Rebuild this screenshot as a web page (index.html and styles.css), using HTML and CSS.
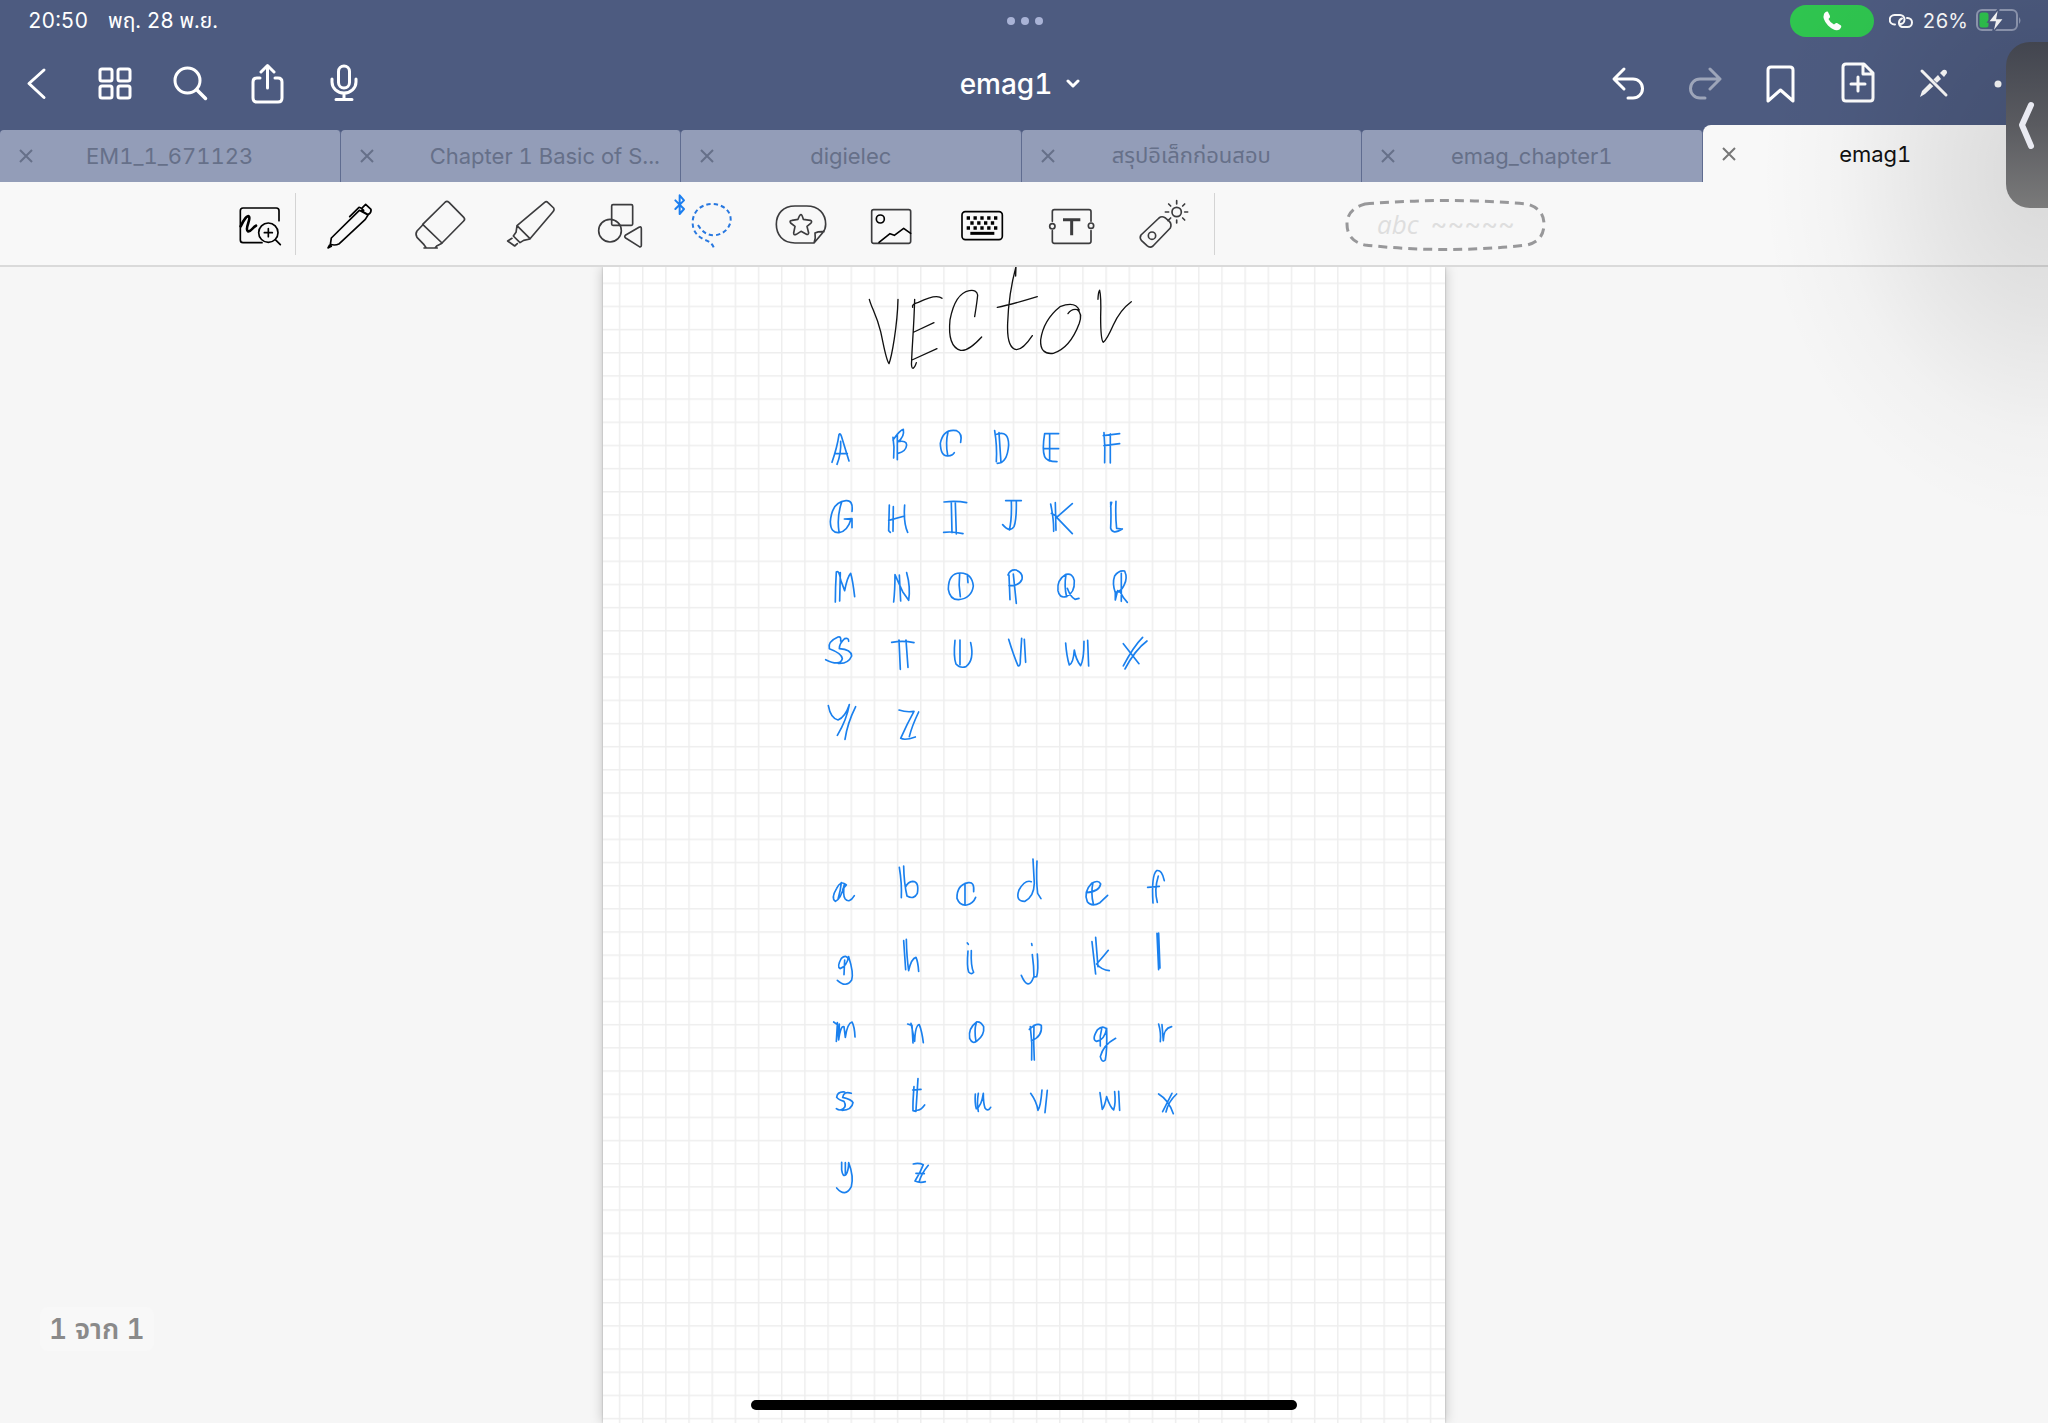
FILE: index.html
```html
<!DOCTYPE html>
<html lang="th">
<head>
<meta charset="utf-8">
<meta name="viewport" content="width=device-width, initial-scale=1">
<title>emag1</title>
<link rel="stylesheet" href="styles.css">
</head>
<body>
<div class="app">
  <header class="header">
    <div class="status">
      <div class="status-left"><span>20:50</span><span>พฤ. 28 พ.ย.</span></div>
      <div class="dots"><i></i><i></i><i></i></div>
      <div class="status-right">
        <span class="call">
          <svg width="22" height="22" viewBox="0 0 22 22"><path fill="#fff" d="M3 4C4 2 6 1 7 2L9 6Q9.500 7.500 7.500 9Q9 12.500 13 14.500Q14.500 12.500 16 13L20 15.500Q21 17 18.500 19.500Q14 22 7 15.500Q1 9 3 4Z"/></svg>
        </span>
        <svg class="link" width="24" height="16" viewBox="0 0 24 16"><path class="line" d="M6 11.500H5.500A4.500 4.500 0 0 1 5.500 2H11A4.500 4.500 0 0 1 11 11H10M18 5H18.500A4.500 4.500 0 0 1 18.500 14H13A4.500 4.500 0 0 1 13 5.500"/></svg>
        <span>26%</span>
        <svg class="battery" width="46" height="28" viewBox="0 -2 46 28"><rect x="1" y="1" width="40" height="20" rx="5" fill="none" stroke="#929bb5" stroke-width="2"/><path d="M43 8Q46 11.500 43 15Z" fill="#929bb5"/><rect x="3.500" y="3.500" width="9" height="15" rx="2.500" fill="#2fc54f"/><path d="M23 -1L12 13H19L16.500 24L28 9.500H21Z" fill="#fff" stroke="#4d5b80" stroke-width="1.500"/></svg>
      </div>
    </div>

    <nav class="nav">
      <div class="nav-group">
        <button class="nav-btn" aria-label="Back"><svg width="75" height="58" viewBox="0 55 75 58"><path class="line" d="M44 70L29 83.500L44 97.500"/></svg></button>
        <button class="nav-btn" aria-label="Pages"><svg width="77" height="58" viewBox="75 55 77 58"><g class="line"><rect x="100" y="69" width="12" height="12" rx="2"/><rect x="118" y="69" width="12" height="12" rx="2"/><rect x="100" y="86" width="12" height="12" rx="2"/><rect x="118" y="86" width="12" height="12" rx="2"/></g></svg></button>
        <button class="nav-btn" aria-label="Search"><svg width="77" height="58" viewBox="152 55 77 58"><g class="line"><circle cx="187.500" cy="80.500" r="12.500"/><path stroke-width="3.500" d="M197 90L205.500 98.500"/></g></svg></button>
        <button class="nav-btn" aria-label="Share"><svg width="77" height="58" viewBox="229 55 77 58"><path class="line" d="M260 78H257Q253 78 253 82V98Q253 102 257 102H278Q282 102 282 98V82Q282 78 278 78H275M267.500 88V66M261 72L267.500 65.500L274 72"/></svg></button>
        <button class="nav-btn" aria-label="Record"><svg width="77" height="58" viewBox="306 55 77 58"><g class="line"><rect x="338.500" y="66" width="11" height="22" rx="5.500"/><path d="M332 79V82A12 11 0 0 0 356 82V79M344 93V99M336 99.500H352"/></g></svg></button>
      </div>
      <button class="title">emag1 <svg width="14" height="10" viewBox="0 0 14 10"><path class="line" d="M2 2L7 7L12 2"/></svg></button>
      <div class="nav-group nav-end">
        <button class="nav-btn" aria-label="Undo"><svg width="76" height="58" viewBox="1591 55 76 58"><path class="line" d="M1624 69L1614 79L1624 89M1615 79H1633A9.500 9.500 0 0 1 1633 98H1628"/></svg></button>
        <button class="nav-btn" aria-label="Redo" disabled><svg width="76" height="58" viewBox="1667 55 76 58"><path class="line" d="M1710 69L1720 79L1710 89M1719 79H1700A9.500 9.500 0 0 0 1700 98H1705"/></svg></button>
        <button class="nav-btn" aria-label="Bookmark"><svg width="76" height="58" viewBox="1743 55 76 58"><path class="line" d="M1768 70Q1768 67 1771 67H1790Q1793 67 1793 70V101L1780.500 90L1768 101Z"/></svg></button>
        <button class="nav-btn" aria-label="Add page"><svg width="76" height="58" viewBox="1819 55 76 58"><path class="line" d="M1864 64H1846Q1843 64 1843 67V98Q1843 101 1846 101H1870Q1873 101 1873 98V73ZM1863 65V74H1872M1858 77V91M1851 84H1865"/></svg></button>
        <button class="nav-btn" aria-label="Read only"><svg width="76" height="58" viewBox="1895 55 76 58"><path fill="#fff" d="M1920 97L1922 91L1938 75L1941 79L1925 94ZM1940 73L1943 70Q1947 69 1947 73L1944 77Z"/><path d="M1922 72L1947 96" stroke="#4b587b" stroke-width="5"/><path class="line" d="M1922 71L1946 95"/></svg></button>
        <button class="nav-btn" aria-label="More"><svg width="76" height="58" viewBox="1971 55 76 58"><g fill="#fff"><circle cx="1998" cy="84" r="3.500"/><circle cx="2010" cy="84" r="3.500"/><circle cx="2022" cy="84" r="3.500"/></g></svg></button>
      </div>
    </nav>

    <div class="tabs">
      <div class="tab"><button class="close" aria-label="Close tab"><svg width="14" height="14" viewBox="0 0 14 14"><path d="M1 1L13 13M13 1L1 13"/></svg></button><a href="#">EM1_1_671123</a></div>
      <div class="tab tab-long"><button class="close" aria-label="Close tab"><svg width="14" height="14" viewBox="0 0 14 14"><path d="M1 1L13 13M13 1L1 13"/></svg></button><a href="#">Chapter 1 Basic of S...</a></div>
      <div class="tab"><button class="close" aria-label="Close tab"><svg width="14" height="14" viewBox="0 0 14 14"><path d="M1 1L13 13M13 1L1 13"/></svg></button><a href="#">digielec</a></div>
      <div class="tab"><button class="close" aria-label="Close tab"><svg width="14" height="14" viewBox="0 0 14 14"><path d="M1 1L13 13M13 1L1 13"/></svg></button><a href="#">สรุปอิเล็กก่อนสอบ</a></div>
      <div class="tab"><button class="close" aria-label="Close tab"><svg width="14" height="14" viewBox="0 0 14 14"><path d="M1 1L13 13M13 1L1 13"/></svg></button><a href="#">emag_chapter1</a></div>
      <div class="tab tab-active"><button class="close" aria-label="Close tab"><svg width="14" height="14" viewBox="0 0 14 14"><path d="M1 1L13 13M13 1L1 13"/></svg></button><a href="#">emag1</a></div>
    </div>
  </header>

  <div class="tools">
    <button class="tool tool-zoom" aria-label="Zoom window"><svg viewBox="0 12 225 180"><g class="ink bold"><path d="M177 92V62Q177 54 169 54H69Q61 54 61 62V150Q61 158 69 158H126"/><path stroke-width="8" d="M62 109C72 88 82 74 87 80C94 88 72 118 84 124C94 126 99 110 108 107"/><circle cx="145" cy="128" r="29"/><path d="M133 128H157M145 116V140M166 149L181 164"/></g></svg></button>
    <span class="rule"></span>
    <button class="tool" aria-label="Pen"><svg viewBox="255 12 270 180"><path class="ink bold" d="M324 174L329 165L334 169ZM331 163L334 144L418 61L444 75L436 88L358 161Q345 168 331 163M428 52L437 43L453 58Q455 66 445 74L424 62M389 80L417 52L423 54L431 61"/></svg></button>
    <button class="tool" aria-label="Eraser"><svg viewBox="525 12 270 180"><path class="ink" d="M608 103L676 36Q681 32 687 37L732 83Q736 88 731 93L666 159ZM608 105L591 123Q585 132 591 142L612 164L619 174H645L650 168L666 160M612 174H652"/></svg></button>
    <button class="tool" aria-label="Highlighter"><svg viewBox="795 12 270 180"><path class="ink" d="M891 107L974 37Q979 33 984 38L1001 54Q1004 60 999 65L930 146ZM891 108L888 127L880 138L900 158L911 151L930 147M876 145L863 153L884 168L892 161"/></svg></button>
    <button class="tool" aria-label="Shapes"><svg viewBox="1065 12 270 180"><g class="ink"><rect x="1175" y="44" width="63" height="62" rx="4"/><circle cx="1170" cy="122" r="34"/><path d="M1257 112L1216 136Q1212 140 1217 144L1258 170Q1264 172 1264 166V116Q1264 108 1257 112Z"/></g></svg></button>
    <button class="tool" aria-label="Lasso"><svg viewBox="1335 12 270 180"><path class="ink blue radio" d="M1366 31L1392 57L1379 72V16L1392 31L1366 57"/><g class="ink blue dashed"><path d="M1434 105C1445 123 1460 137 1484 136C1512 133 1532 112 1532 88C1532 62 1508 42 1476 42C1444 42 1419 64 1418 95C1417 125 1434 140 1453 149Q1474 155 1481 172"/></g></svg></button>
    <button class="tool" aria-label="Stickers"><svg viewBox="165 12 270 180"><g class="ink"><path d="M342 159H285C248 159 229 134 229 103C229 70 250 48 285 48H320C356 48 377 70 377 103Q377 118 368 128ZM342 159Q348 145 345 129Q355 124 372 125"/><path d="M303 74Q306 74 310 88L331 91Q338 94 332 100L321 109L326 129Q325 136 318 132L303 124L289 133Q281 137 281 129L285 109L272 99Q267 92 276 91L294 88Q299 74 303 74Z"/></g></svg></button>
    <button class="tool" aria-label="Image"><svg viewBox="435 12 270 180"><g class="ink"><rect x="515" y="59" width="117" height="101" rx="6"/><g class="bold"><circle cx="541" cy="87" r="12"/><path d="M537 157L570 131L583 136L611 115L632 130"/></g></g></svg></button>
    <button class="tool" aria-label="Keyboard"><svg viewBox="705 12 270 180"><rect class="ink bold" x="786" y="65" width="121" height="84" rx="10"/><path stroke="#000" stroke-width="10" stroke-dasharray="10 10.500" d="M800 84H894M811 99H885M800 114H894"/><path stroke="#000" stroke-width="9" d="M811 130H883"/></svg></button>
    <button class="tool" aria-label="Text box"><svg viewBox="975 12 270 180"><g class="ink"><path d="M1057 94V65Q1057 59 1063 59H1167Q1173 59 1173 65V94M1057 122V154Q1057 160 1063 160H1167Q1173 160 1173 154V122"/><circle cx="1057" cy="109" r="8"/><circle cx="1173" cy="107" r="8"/><path class="heavy" d="M1089 89H1141M1115 89V136"/></g></svg></button>
    <button class="tool" aria-label="Laser pointer"><svg viewBox="1245 12 270 180"><g class="ink"><path d="M1323 135L1377 84Q1385 77 1395 83L1408 94Q1416 102 1411 114L1359 168Q1350 175 1341 167L1324 151Q1318 143 1323 135Z"/><circle cx="1356" cy="137" r="11"/><circle cx="1430" cy="66" r="14"/><path d="M1430 32V42M1430 90V99M1396 66H1406M1454 66H1463M1406 42L1412 48M1448 84L1454 90M1454 42L1448 48M1412 84L1404 92"/></g></svg></button>
    <span class="rule rule-end"></span>
    <button class="style"><svg width="202" height="62" viewBox="1344 192 202 62"><path d="M1364 203Q1445 196 1526 203Q1543 208 1543 223Q1543 240 1526 244Q1445 253 1364 244Q1346 240 1346 223Q1346 208 1364 203Z"/></svg><span class="sample"><i>abc</i><span>~~~~~</span></span></button>
  </div>

  <main class="desk">
    <div class="sheet">
      <svg class="paper" viewBox="603 267 842 1156" preserveAspectRatio="xMidYMin slice" role="img" aria-label="Vector, A to Z, a to z">
        <defs><pattern id="grid" x="618.800" y="282.500" width="23.170" height="23.170" patternUnits="userSpaceOnUse"><path d="M0 .75H23.170M.75 0V23.170" stroke="#eeeeee" stroke-width="1.500"/></pattern></defs>
        <rect x="603" y="267" width="842" height="3000" fill="url(#grid)"/>
        <g class="hand black" transform="translate(840 260) scale(.3333)">
          <path d="M88 118C95 145 110 165 122 215C132 260 138 300 147 311C155 290 172 200 174 118"/>
          <path d="M224 118C222 200 216 260 215 300Q213 325 219 325Q225 322 229 308M218 142Q214 132 235 127Q290 100 306 115M222 216L282 188M216 300L291 266"/>
          <path d="M404 170Q412 120 413 105Q410 88 388 92Q345 100 330 180Q322 260 362 271Q385 275 425 231"/>
          <path d="M527 48L528 20Q506 100 503 190Q500 265 530 269Q550 268 577 227M472 142Q510 135 592 110"/>
          <path d="M684 161Q695 145 712 149Q728 160 718 190Q690 265 640 280Q600 285 602 240Q610 180 660 140Q705 122 718 150"/>
          <path d="M774 118Q775 95 779 91Q784 110 782 170Q782 240 790 247Q800 240 820 195Q840 150 874 125"/>
        </g>
        <g class="hand" transform="translate(810 410) scale(.3333)">
          <path d="M66 157Q82 110 87 74Q90 68 94 78L117 153M92 94Q94 130 81 163M74 130L112 131"/>
          <path d="M249 82Q254 110 251 144M262 72L262 149M249 90Q270 60 280 58Q284 80 264 95Q290 90 290 105Q288 125 264 130"/>
          <path d="M452 97Q458 70 440 62Q400 55 391 100Q392 140 414 138Q428 137 433 128M414 66Q406 100 413 135"/>
          <path d="M554 62Q562 110 559 155M567 68L573 158M560 73Q596 60 596 105Q592 160 562 160"/>
          <path d="M746 71H704Q696 120 704 140Q710 155 741 155M719 72V153M702 116H746"/>
          <path d="M882 68Q886 110 884 158M901 72V159M880 77L929 71M882 107L929 101"/>
          <path d="M126 304Q130 270 108 272Q66 275 61 335Q62 370 87 368Q112 365 123 328L103 327L126 326V353M95 277Q80 320 87 366"/>
          <path d="M238 285L236 362L241 367M250 290L249 364M236 331L284 318M284 285Q280 340 293 367"/>
          <path d="M402 276Q440 272 470 278M424 278L426 368M436 278L439 372M401 367Q430 364 459 371"/>
          <path d="M587 272H634M604 273Q606 330 598 360M619 273Q620 330 612 350Q600 370 578 344"/>
          <path d="M722 282Q732 330 731 364M736 278L738 361M787 281L740 322L787 371M724 310L742 320"/>
          <path d="M902 277Q904 320 902 355Q908 375 937 357M918 274Q916 320 920 355L936 357M902 290L905 277"/>
        </g>
        <g class="hand" transform="translate(810 560) scale(.3333)">
          <path d="M76 126Q76 80 79 36Q88 30 92 60L104 92Q112 50 122 40Q128 60 134 110M91 38L89 123"/>
          <path d="M251 126Q255 90 255 44Q262 60 278 95L296 121Q302 80 290 38M268 45L272 123"/>
          <path d="M452 39Q415 38 415 88Q420 120 446 119Q485 115 490 78Q486 40 452 39M449 40Q445 75 451 110M472 44L474 68"/>
          <path d="M597 45L600 119M610 42L619 130M594 45Q600 28 618 30Q640 38 636 58Q628 78 597 77"/>
          <path d="M768 43Q740 60 744 92Q748 115 768 110Q795 100 793 62Q788 38 768 43M768 44Q762 80 770 110M772 85Q782 112 795 118L807 115"/>
          <path d="M923 92L916 120V98Q906 70 914 48Q926 30 944 33Q954 55 942 76Q934 94 916 97L930 95Q940 115 952 127M934 40V124"/>
          <path d="M92 243Q94 228 84 231Q52 245 58 266Q96 280 97 296Q90 320 47 299M116 244Q116 232 104 236Q88 250 88 266Q124 268 125 288Q115 312 85 310"/>
          <path d="M245 247Q280 241 312 248M267 240L271 328M288 240L294 322"/>
          <path d="M435 241Q430 290 438 312Q450 326 468 320Q494 300 482 248M450 240V314"/>
          <path d="M596 238Q612 290 624 317Q632 320 631 300L635 235M643 238L647 307"/>
          <path d="M767 249Q770 290 778 315Q790 310 793 270Q798 300 812 317Q822 300 822 244M833 241L836 318"/>
          <path d="M940 251L987 311M998 232Q970 260 940 318M1011 243Q975 270 945 327"/>
          <path d="M55 437Q62 475 84 480Q106 470 118 434Q110 480 82 526M137 440Q112 490 105 538"/>
          <path d="M267 450Q290 458 312 454Q292 490 272 535Q285 542 316 531M326 456Q305 500 298 530"/>
        </g>
        <g class="hand" transform="translate(810 850) scale(.3333)">
          <path d="M108 104Q92 90 80 115Q62 145 76 154Q92 150 103 104Q98 135 105 146Q118 162 133 137M94 98Q92 120 84 148M98 118L109 105"/>
          <path d="M268 52Q276 100 274 143M281 48Q282 100 291 138Q312 150 322 130Q328 94 308 94Q294 95 286 112"/>
          <path d="M491 125Q494 95 475 98Q440 105 441 145Q450 168 470 165Q490 160 497 142M465 100V162"/>
          <path d="M664 95Q645 88 627 120Q615 155 645 154Q672 140 673 100L669 27M681 33Q678 90 683 130L693 146"/>
          <path d="M829 128Q868 125 872 102Q865 88 845 100Q820 125 832 155Q845 172 870 158L893 136M849 98Q842 130 850 161"/>
          <path d="M1063 92Q1056 58 1040 62Q1024 75 1029 159M1045 78Q1032 120 1042 157M1013 112L1048 109"/>
          <path d="M116 328Q108 312 94 325Q80 350 90 356Q110 350 116 320Q132 370 125 390Q108 415 82 391M104 330L102 374"/>
          <path d="M281 272L287 359M289 268Q290 320 296 362Q304 325 318 322Q324 335 326 364"/>
          <path d="M474 303Q470 350 476 366Q484 375 491 367Q482 350 484 302M472 279L475 283"/>
          <path d="M667 314Q672 350 672 382M682 312Q686 360 680 380L671 381Q655 425 634 376M665 281L666 286"/>
          <path d="M846 275L857 372M857 262L864 350M895 301Q880 320 860 342Q875 360 898 362"/>
          <path d="M1041 250L1046 359M1046 249L1050 354M1043 252L1046 320"/>
        </g>
        <g class="hand" transform="translate(810 1000) scale(.3333)">
          <path d="M71 66L82 74L79 124M82 68L86 120Q92 75 102 80L106 112Q112 70 126 66Q134 80 135 111M88 72L87 110"/>
          <path d="M293 72L306 76L309 129M303 70L314 124Q316 75 328 74Q336 95 340 128"/>
          <path d="M500 66Q474 85 479 115Q488 135 502 122Q524 105 521 80Q512 64 500 66M499 68Q492 90 498 124"/>
          <path d="M661 80Q668 130 665 180M672 76Q670 130 673 180M658 88Q680 66 694 76Q698 110 664 122"/>
          <path d="M890 88Q880 74 862 90Q844 120 860 124Q884 120 890 85Q892 150 886 180Q876 190 871 170Q880 135 917 115M876 82Q868 110 871 138"/>
          <path d="M1046 72Q1054 100 1051 125M1056 74L1060 122Q1060 85 1085 80"/>
          <path d="M104 276Q82 274 80 292Q86 300 102 304Q110 318 100 326Q90 334 79 326M124 280Q102 272 98 292Q125 298 129 308Q126 330 96 331"/>
          <path d="M324 236L318 330Q330 334 344 315M312 260Q308 310 309 332L318 334M308 270L333 268"/>
          <path d="M496 282Q494 310 499 326Q514 320 520 280Q520 310 525 324Q534 336 542 322M505 280Q500 310 505 334"/>
          <path d="M662 280Q680 305 684 331Q692 320 696 270M712 271L705 338"/>
          <path d="M870 278L877 328Q884 320 890 290Q900 320 911 330Q918 310 914 275M926 274L929 331"/>
          <path d="M1046 282Q1076 300 1090 341M1086 280L1058 335M1100 282Q1075 305 1068 336"/>
          <path d="M95 487V510Q98 532 108 524Q116 510 116 488Q132 530 124 560Q106 594 80 564M106 488V522"/>
          <path d="M310 492Q326 488 340 494Q330 520 315 543Q330 550 346 545M355 496Q335 520 328 544M318 520L343 521"/>
        </g>
      </svg>
    </div>
    <p class="counter">1 จาก 1</p>
    <div class="home-bar"></div>
  </main>
</div>
<div class="drawer-shade"></div>
<button class="drawer" aria-label="Show call"><svg width="42" height="60" viewBox="0 0 42 60"><path d="M25 10L16 30L25 51"/></svg></button>
</body>
</html>
```
FILE: styles.css
```css
* { box-sizing: border-box; }

body {
  position: relative;
  margin: 0;
  min-height: 100vh;
  overflow: hidden;
  font-family: Inter, "Noto Sans", "Noto Sans Thai", sans-serif;
  font-variant-numeric: tabular-nums;
  background: #f6f6f6;
}

button {
  padding: 0;
  border: 0;
  background: none;
  color: inherit;
  font: inherit;
}

svg { display: block; flex: none; }

.app {
  display: flex;
  flex-direction: column;
  min-height: 100vh;
}

.header {
  background: #4d5b80;
  color: #fff;
}

.line {
  fill: none;
  stroke: #fff;
  stroke-width: 3;
  stroke-linecap: round;
  stroke-linejoin: round;
}

/* Status bar */
.status {
  display: grid;
  grid-template-columns: 1fr auto 1fr;
  align-items: center;
  height: 42px;
  padding: 0 26px 0 28px;
  font-size: 20px;
}

.status-left {
  display: flex;
  gap: 20px;
  font-size: 21px;
  line-height: 30px;
}

.dots { display: flex; gap: 6px; }

.dots i {
  width: 8px;
  height: 8px;
  border-radius: 50%;
  background: #a9b3d6;
}

.status-right {
  display: flex;
  align-items: center;
  justify-content: flex-end;
}

.call {
  display: grid;
  place-items: center;
  width: 84px;
  height: 32px;
  border-radius: 16px;
  background: #2fc54f;
}

.link { margin: 0 9px 0 15px; }
.link .line { stroke-width: 2; }
.battery { margin-left: 8px; }

/* Document bar */
.nav {
  display: grid;
  grid-template-columns: 1fr auto 1fr;
  align-items: center;
  height: 83px;
}

.nav-group { display: flex; }

.nav-end {
  justify-content: flex-end;
  padding-right: 1px;
}

.nav-btn:disabled { opacity: 0.45; }

.title {
  display: flex;
  align-items: center;
  gap: 14px;
  padding-right: 8px;
  font-size: 28px;
  font-weight: 500;
}

/* Tabs */
.tabs {
  display: grid;
  grid-template-columns: repeat(5, 341fr) 346fr;
  align-items: end;
  height: 57px;
}

.tab {
  display: grid;
  grid-template-columns: 52px 1fr 52px;
  align-items: center;
  height: 52px;
  border-right: 1px solid #5f6c90;
  border-radius: 4px 4px 0 0;
  background: #939db8;
  color: #667089;
  font-size: 22px;
}

.tab a {
  color: inherit;
  text-align: center;
  text-decoration: none;
  white-space: nowrap;
}

.tab-long { grid-template-columns: 52px 1fr 20px; }
.tab-long a { text-align: right; }

.close {
  display: grid;
  place-items: center;
  height: 100%;
}

.close path {
  fill: none;
  stroke: currentColor;
  stroke-width: 2;
}

.tab-active {
  height: 57px;
  border-right: 0;
  border-radius: 8px 8px 0 0;
  background: #f8f8f8;
  color: #111;
}

.tab-active .close { color: #777; }

/* Toolbar */
.tools {
  display: flex;
  align-items: center;
  height: 85px;
  padding-left: 220px;
  border-bottom: 2px solid #dadada;
  background: #f8f8f8;
}

.tool { flex: none; width: 90px; height: 60px; }
.tool svg { width: 100%; height: 100%; }
.tool-zoom { width: 75px; }

.ink {
  fill: none;
  stroke: #3c3c3e;
  stroke-width: 5;
  stroke-linecap: round;
  stroke-linejoin: round;
}

.bold { stroke: #000; }
.blue { stroke: #1c7ff0; }
.radio { stroke-width: 6; }
.dashed { stroke: #2878e0; stroke-width: 6; stroke-dasharray: 13 9; stroke-linecap: butt; }
.heavy { stroke-width: 9; stroke-linecap: butt; }

.rule {
  width: 1px;
  height: 62px;
  margin-right: 9px;
  background: #d4d4d4;
}

.rule-end { margin: 0 130px 0 9px; }

.style {
  display: grid;
  place-items: center;
}

.style > * { grid-area: 1 / 1; }

.style path {
  fill: none;
  stroke: #98989a;
  stroke-width: 3;
  stroke-dasharray: 9 6;
}

.sample {
  display: flex;
  align-items: center;
  gap: 12px;
  color: #dedede;
  font-size: 26px;
}

.sample i { font-family: "Open Sans", sans-serif; }

/* Page canvas */
.desk {
  position: relative;
  display: flex;
  flex: 1;
  justify-content: center;
  overflow: hidden;
  background: #f6f6f6;
}

.sheet {
  display: flex;
  width: min(842px, 100%);
  background: #fff;
  box-shadow: 0 0 12px rgba(0, 0, 0, 0.22), 0 0 2px rgba(0, 0, 0, 0.25);
}

.paper { flex: 1; width: 100%; height: auto; }

.hand {
  fill: none;
  stroke: #1a80ee;
  stroke-width: 5;
  stroke-linecap: round;
  stroke-linejoin: round;
}

.black { stroke: #111; stroke-width: 4; }

.counter {
  position: absolute;
  bottom: 72px;
  left: 40px;
  margin: 0;
  padding: 0 9px;
  border-radius: 8px;
  background: #f8f8f8;
  color: #8a8a8a;
  font-size: 28px;
  font-weight: 600;
  line-height: 44px;
}

.home-bar {
  position: absolute;
  bottom: 13px;
  left: 50%;
  width: 546px;
  height: 10px;
  border-radius: 5px;
  background: #000;
  transform: translateX(-50%);
}

/* Side drawer handle of the floating call window */
.drawer-shade {
  position: absolute;
  top: 0;
  right: 0;
  width: 300px;
  height: 540px;
  background: radial-gradient(ellipse at 100% 32%, rgba(0, 0, 0, 0.13), rgba(0, 0, 0, 0.08) 25%, rgba(0, 0, 0, 0.02) 50%, transparent 68%);
  pointer-events: none;
}

.drawer {
  position: absolute;
  top: 42px;
  right: 0;
  display: flex;
  align-items: center;
  width: 42px;
  height: 166px;
  border-radius: 24px 0 0 24px;
  background: linear-gradient(#42454f, #5a5b60 50%, #7a7a7a);
}

.drawer path {
  fill: none;
  stroke: #e9eaf2;
  stroke-width: 6;
  stroke-linecap: round;
  stroke-linejoin: round;
}
```
